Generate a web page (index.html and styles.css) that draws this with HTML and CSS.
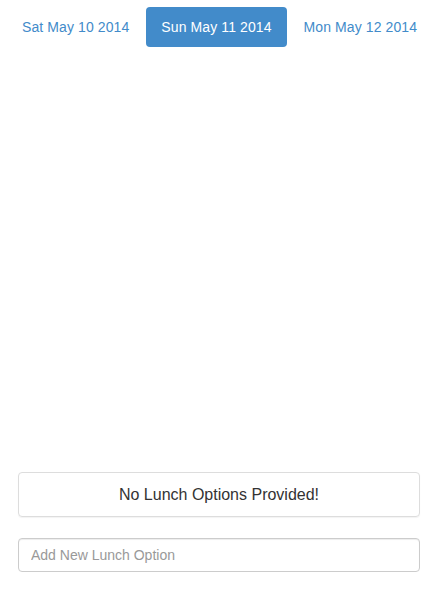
FILE: index.html
```html
<!DOCTYPE html>
<html>
<head>
<meta charset="utf-8">
<link rel="stylesheet" href="styles.css">
</head>
<body>
<div class="page">
  <ul class="pills">
    <li><a href="#">Sat May 10 2014</a></li>
    <li class="active"><a href="#">Sun May 11 2014</a></li>
    <li><a href="#">Mon May 12 2014</a></li>
  </ul>
  <div class="content"></div>
  <div class="bottom">
    <div class="panel">No Lunch Options Provided!</div>
    <input class="form-control" type="text" placeholder="Add New Lunch Option">
  </div>
</div>
</body>
</html>
```

FILE: styles.css
```css
* { box-sizing: border-box; }
html, body { margin: 0; padding: 0; background: #fff; }
body {
  font-family: "Liberation Sans", Arial, sans-serif;
  font-size: 14px;
  line-height: 20px;
  color: #333;
}
.page {
  display: flex;
  flex-direction: column;
  height: 100vh;
}
.pills {
  list-style: none;
  margin: 0;
  padding: 7px 0 0 7px;
  display: flex;
  gap: 2px;
  white-space: nowrap;
}
.pills a {
  display: block;
  padding: 10px 15px;
  color: #428bca;
  text-decoration: none;
  border-radius: 4px;
  letter-spacing: 0.1px;
}
.pills .active a {
  background: #428bca;
  color: #fff;
}
.content { flex: 1; }
.bottom {
  padding: 0 14px 27px 18px;
  display: flex;
  flex-direction: column;
  gap: 21px;
}
.panel {
  border: 1px solid #ddd;
  border-radius: 4px;
  box-shadow: 0 1px 1px rgba(0,0,0,.05);
  padding: 10px 15px 10px;
  font-size: 16px;
  line-height: 23px;
  text-align: center;
  color: #333;
}
.form-control {
  display: block;
  width: 100%;
  height: 34px;
  padding: 6px 12px;
  font-family: inherit;
  font-size: 14px;
  line-height: 20px;
  color: #555;
  border: 1px solid #ccc;
  border-radius: 4px;
  box-shadow: inset 0 1px 1px rgba(0,0,0,.075);
  outline: none;
}
.form-control::placeholder { color: #999; }
```
